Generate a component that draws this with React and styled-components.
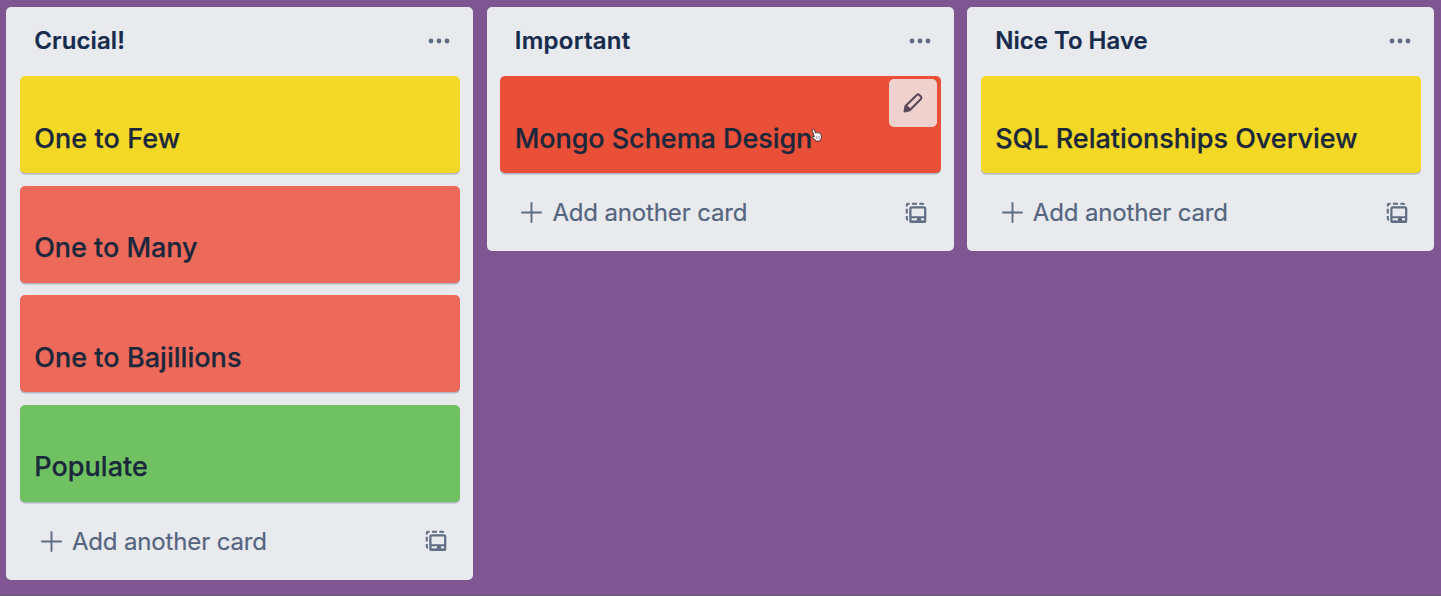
import React from "react";
import styled, { createGlobalStyle } from "styled-components";

const GlobalStyle = createGlobalStyle`
  * { box-sizing: border-box; }
  body { margin: 0; background: #7f5692; overflow: hidden; }
`;

const Board = styled.main`
  display: flex;
  align-items: flex-start;
  gap: 13.4px;
  height: 596px;
  padding: 7px 6.4px 0;
  background: #7f5692;
  border-bottom: 1px solid #6b5a78;
  font-family: Inter, "Liberation Sans", sans-serif;
`;

const List = styled.section`
  flex: 0 0 467.1px;
  padding: 0 13.3px 0 13.5px;
  background: #e8eaee;
  border-radius: 5px;
`;

const ListHeader = styled.header`
  display: flex;
  align-items: center;
  justify-content: space-between;
  height: 69px;
  padding: 0 9px 2px 14.4px;
`;

const ListTitle = styled.h2`
  margin: 0;
  font-size: 24px;
  line-height: 30px;
  font-weight: 600;
  color: #172b4d;
  white-space: nowrap;
  -webkit-text-stroke: 0.2px #172b4d;
  letter-spacing: ${(p) => p.$tracking}px;
`;

const Cards = styled.div`
  display: flex;
  flex-direction: column;
  gap: 12.3px;
`;

const Card = styled.article`
  position: relative;
  display: flex;
  align-items: flex-end;
  height: 97.3px;
  padding: 0 14.3px 18.7px;
  border-radius: 5px;
  background: ${(p) => p.$color};
  box-shadow: 0 1.5px 0 rgba(9, 30, 66, 0.25);
`;

const CardTitle = styled.span`
  font-size: 27px;
  line-height: 32px;
  font-weight: 500;
  color: #1b283c;
  white-space: nowrap;
  -webkit-text-stroke: 0.25px #1b283c;
  letter-spacing: ${(p) => p.$tracking}px;
`;

const EditButton = styled.button`
  position: absolute;
  top: 3.4px;
  right: 3.6px;
  display: grid;
  place-items: center;
  width: 48px;
  height: 48px;
  padding: 0;
  border: 0;
  border-radius: 5px;
  background: #efd1cd;
`;

const Pointer = styled.svg`
  position: absolute;
  left: 311px;
  top: 52px;
`;

const ListFooter = styled.footer`
  display: flex;
  align-items: center;
  justify-content: space-between;
  height: 78px;
  padding: 0.6px 13.6px 0 21px;
`;

const AddButton = styled.button`
  display: flex;
  align-items: center;
  gap: 10px;
  padding: 0;
  border: 0;
  background: none;
  color: #56657f;
  font: 400 24px/30px Inter, "Liberation Sans", sans-serif;
  letter-spacing: -0.15px;
  white-space: nowrap;
  -webkit-text-stroke: 0.2px #56657f;
`;

const AddLabel = styled.span`
  padding-top: 1px;
`;

const Icon = styled.svg`
  display: block;
  flex: none;
`;

const DotsIcon = () => (
  <Icon width="24" height="8" viewBox="0 0 24 8" fill="#5e6c84">
    <circle cx="4" cy="4" r="2.4" />
    <circle cx="12" cy="4" r="2.4" />
    <circle cx="20" cy="4" r="2.4" />
  </Icon>
);

const PlusIcon = () => (
  <Icon width="21" height="21" viewBox="0 0 21 21" stroke="#5e6c84" strokeWidth="1.9" strokeLinecap="round">
    <path d="M10.5 1v19M1 10.5h19" />
  </Icon>
);

const TemplateIcon = () => (
  <Icon width="22" height="22" viewBox="0 0 22 22" fill="none" stroke="#5e6c84" strokeWidth="2">
    <path d="M1.8 4.6V3Q1.8 1.8 3 1.8H4.6M7 1.8h5M14.4 1.8h2.4Q18 1.8 18.6 2.6M1.8 6.8v4.8M1.8 14v2.4Q1.8 17.6 3 18" />
    <rect x="5.4" y="5.4" width="14.8" height="14.4" rx="1.4" strokeWidth="2.2" />
    <path d="M5.4 14.2h14.8v2H5.4zM12 15h4v4.6h-4zM4.8 18.6h16v2h-16z" fill="#5e6c84" stroke="none" />
  </Icon>
);

const PencilIcon = () => (
  <Icon width="22" height="22" viewBox="0 0 22 22" fill="none" stroke="#594858" strokeWidth="2.1" strokeLinejoin="round">
    <path d="M4 13.6 14.8 2.9Q16 1.8 17.2 2.9L18.9 4.6Q20 5.8 18.9 7L8.2 17.8Z" />
    <path d="M2.6 12.9 8.9 18.9 2.9 20.4Q1.4 20.6 1.6 19.2Z" fill="#594858" stroke="none" />
  </Icon>
);

const HandPointer = () => (
  <Pointer width="12" height="15" viewBox="0 0 12 15">
    <path
      d="M1.3 1.4Q2.2.5 3.1 1.7L4.7 5Q5.5 4.2 6.3 5 7.2 4.2 8 5.1 9 4.5 9.6 5.5L10.5 8.4Q10.7 10.3 9.3 11.8L9.2 13H4.7L4.4 12 1.2 9.4Q.5 8.5 1.6 8.3L3.4 8.9 1.2 2.5Q1 1.8 1.3 1.4Z"
      fill="#fff"
      stroke="#3b2a33"
      strokeWidth="0.9"
    />
    <path d="M5.5 8.2v2.7M7 8.2v2.7M8.4 8.2v2.7" stroke="#7d6c74" strokeWidth="0.6" />
  </Pointer>
);

const YELLOW = "#f3d925";
const SALMON = "#ed6959";
const RED = "#ea4f38";
const GREEN = "#6fc161";

const lists = [
  {
    title: "Crucial!",
    tracking: 0.1,
    cards: [
      { title: "One to Few", color: YELLOW, tracking: 0.08 },
      { title: "One to Many", color: SALMON, tracking: -0.03 },
      { title: "One to Bajillions", color: SALMON, tracking: 0.04 },
      { title: "Populate", color: GREEN, tracking: 0.05 },
    ],
  },
  {
    title: "Important",
    tracking: 0.27,
    cards: [{ title: "Mongo Schema Design", color: RED, tracking: -0.06, hovered: true }],
  },
  {
    title: "Nice To Have",
    tracking: 0,
    cards: [{ title: "SQL Relationships Overview", color: YELLOW, tracking: -0.02 }],
  },
];

export default function App() {
  return (
    <>
      <GlobalStyle />
      <Board>
        {lists.map((list) => (
          <List key={list.title}>
            <ListHeader>
              <ListTitle $tracking={list.tracking}>{list.title}</ListTitle>
              <DotsIcon />
            </ListHeader>
            <Cards>
              {list.cards.map((card) => (
                <Card key={card.title} $color={card.color}>
                  <CardTitle $tracking={card.tracking}>{card.title}</CardTitle>
                  {card.hovered && (
                    <>
                      <EditButton aria-label="Edit card">
                        <PencilIcon />
                      </EditButton>
                      <HandPointer />
                    </>
                  )}
                </Card>
              ))}
            </Cards>
            <ListFooter>
              <AddButton>
                <PlusIcon />
                <AddLabel>Add another card</AddLabel>
              </AddButton>
              <TemplateIcon />
            </ListFooter>
          </List>
        ))}
      </Board>
    </>
  );
}
